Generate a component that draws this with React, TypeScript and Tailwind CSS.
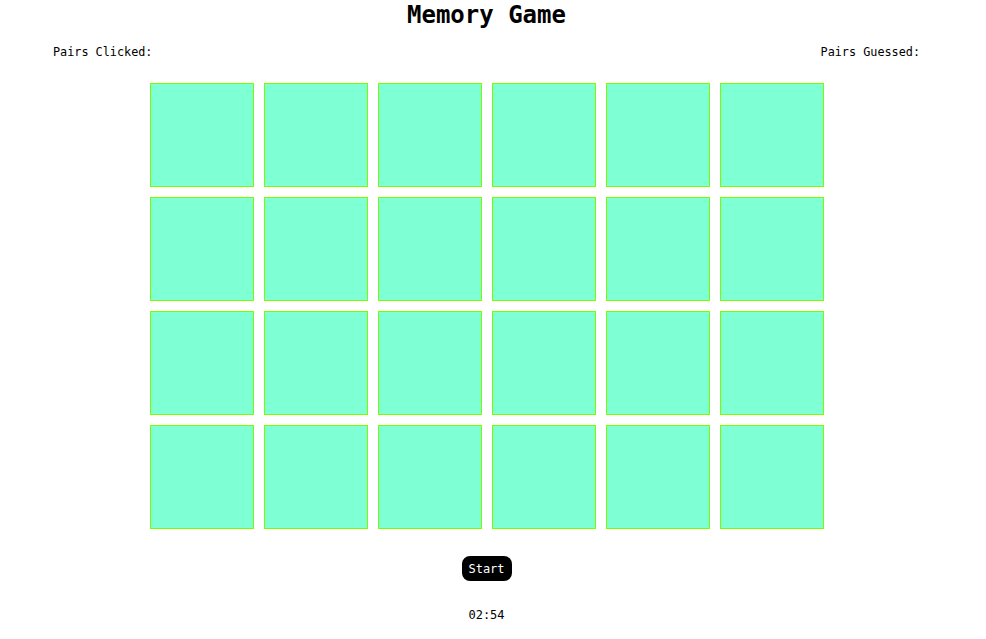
const cards = Array.from({ length: 24 }, (_, i) => i);

export default function App() {
  return (
    <div className="w-[973px] font-['DejaVu_Sans_Mono',monospace] text-black bg-white">
      <h1 className="text-center text-[24px] leading-[28px] font-bold pt-[1px]">Memory Game</h1>
      <div className="flex justify-between pl-[53px] pr-[53px] mt-[16px] text-[11.8px] leading-[14px]">
        <span>Pairs Clicked:</span>
        <span>Pairs Guessed:</span>
      </div>
      <div className="mx-auto mt-[24px] w-[674px] grid grid-cols-6 gap-[10px]">
        {cards.map((c) => (
          <div key={c} className="w-[104px] h-[104px] bg-[#7fffd4] border border-[#7cfc00]" />
        ))}
      </div>
      <div className="flex justify-center mt-[27px]">
        <button className="w-[50px] h-[25px] rounded-[8px] bg-black text-white text-[12px] leading-[14px] font-['DejaVu_Sans_Mono',monospace]">
          Start
        </button>
      </div>
      <p className="text-center text-[12px] leading-[14px] mt-[27px]">02:54</p>
    </div>
  );
}
